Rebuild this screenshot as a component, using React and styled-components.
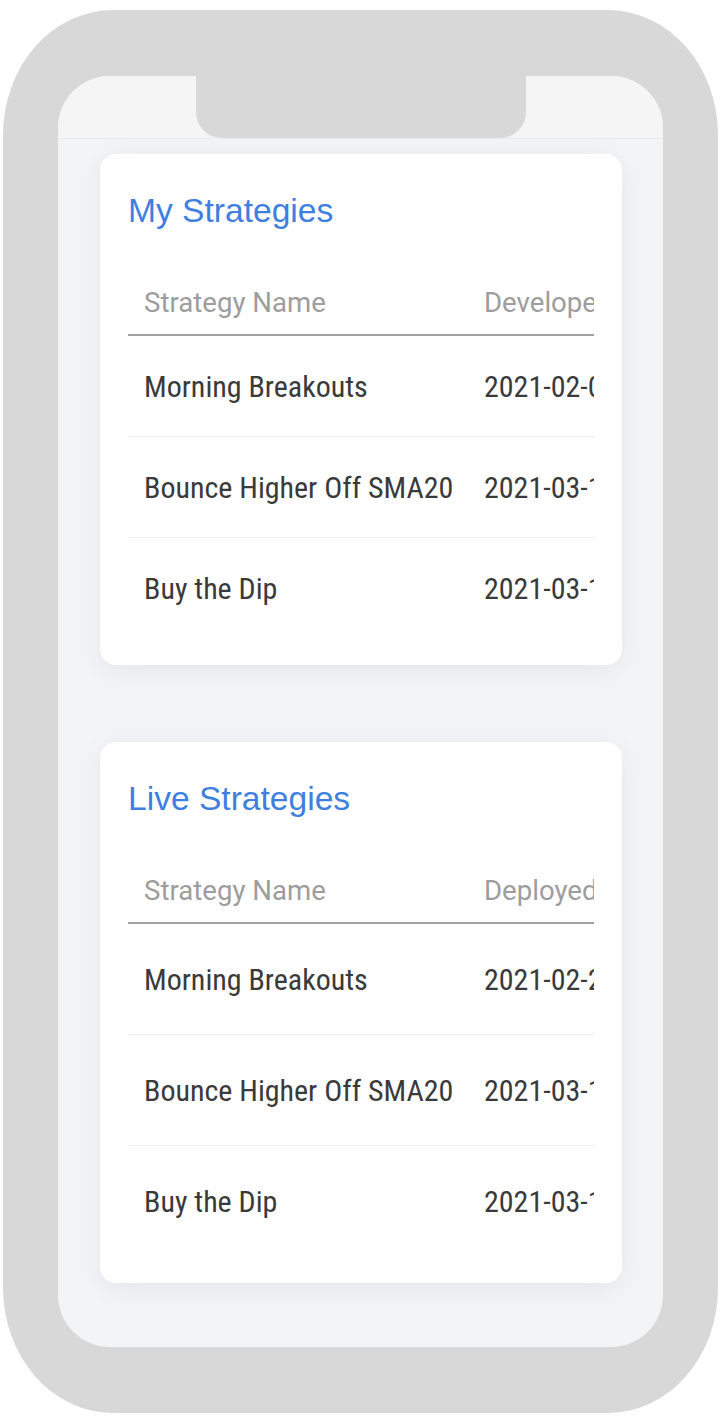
import React from "react"
import styled, { createGlobalStyle } from "styled-components"

const GlobalStyle = createGlobalStyle`
  body {
    margin: 0;
    background: #ffffff;
    font-family: Roboto, "Liberation Sans", sans-serif;
  }
`

const myStrategies = [
  { name: "Morning Breakouts", date: "2021-02-08" },
  { name: "Bounce Higher Off SMA20", date: "2021-03-12" },
  { name: "Buy the Dip", date: "2021-03-15" },
]

const liveStrategies = [
  { name: "Morning Breakouts", date: "2021-02-24" },
  { name: "Bounce Higher Off SMA20", date: "2021-03-16" },
  { name: "Buy the Dip", date: "2021-03-18" },
]

const StrategyCard = ({ title, dateLabel, rows, rowHeight }) => (
  <Card>
    <Title>{title}</Title>
    <TableWrap>
      <HeaderRow>
        <NameHead>Strategy Name</NameHead>
        <DateHead>{dateLabel}</DateHead>
        <DateHead>Status</DateHead>
      </HeaderRow>
      {rows.map((r, i) => (
        <Row key={r.name} height={rowHeight} last={i === rows.length - 1}>
          <NameCell>{r.name}</NameCell>
          <DateCell>{r.date}</DateCell>
          <DateCell>Active</DateCell>
        </Row>
      ))}
    </TableWrap>
  </Card>
)

const App = () => {
  return (
    <>
      <GlobalStyle />
      <Phone>
        <Screen>
          <StatusBar>
            <Notch />
          </StatusBar>
          <Content>
            <StrategyCard title="My Strategies" dateLabel="Developed" rows={myStrategies} rowHeight={101} />
            <StrategyCard title="Live Strategies" dateLabel="Deployed" rows={liveStrategies} rowHeight={111} />
          </Content>
        </Screen>
      </Phone>
    </>
  )
}

export default App

const Phone = styled.div`
  box-sizing: border-box;
  margin: 10px 0 0 3px;
  width: 715px;
  height: 1403px;
  padding: 66px 55px;
  background: #d8d8d8;
  border-radius: 110px / 125px;
`

const Screen = styled.div`
  display: flex;
  flex-direction: column;
  height: 100%;
  background: #f3f4f6;
  border-radius: 52px;
  overflow: hidden;
`

const StatusBar = styled.div`
  display: flex;
  justify-content: center;
  height: 62px;
  flex-shrink: 0;
  background: #f5f5f6;
  border-bottom: 1px solid #e8e9ec;
`

const Notch = styled.div`
  width: 330px;
  height: 62px;
  margin-left: 1px;
  background: #d8d8d8;
  border-radius: 0 0 26px 26px;
`

const Content = styled.div`
  display: flex;
  flex-direction: column;
  gap: 77px;
  padding: 15px 41px 0 42px;
`

const Card = styled.div`
  background: #ffffff;
  border-radius: 16px;
  padding: 38px 28px 26px;
  box-shadow: 0 6px 26px rgba(40, 50, 90, 0.07);
`

const Title = styled.h2`
  margin: 0;
  font-family: "Liberation Sans", Arial, sans-serif;
  font-weight: 400;
  font-size: 33.6px;
  line-height: 38px;
  color: #3e7fe0;
`

const TableWrap = styled.div`
  margin-top: 40px;
  overflow: hidden;
`

const HeaderRow = styled.div`
  display: flex;
  align-items: center;
  height: 66px;
  box-sizing: border-box;
  border-bottom: 2px solid #a2a2a2;
`

const Row = styled.div`
  display: flex;
  align-items: center;
  box-sizing: border-box;
  height: ${p => p.height}px;
  border-bottom: ${p => (p.last ? "none" : "1px solid #ededed")};
`

const NameHead = styled.div`
  flex: 0 0 340px;
  min-width: 0;
  box-sizing: border-box;
  padding: 0 16px;
  font-family: Roboto, sans-serif;
  font-size: 27.6px;
  color: #9d9d9d;
  white-space: nowrap;
`

const DateHead = styled(NameHead)`
  flex: 0 0 auto;
`

const NameCell = styled.div`
  flex: 0 0 340px;
  min-width: 0;
  box-sizing: border-box;
  padding: 0 16px;
  font-family: "Roboto Condensed", "Liberation Sans Narrow", Roboto, sans-serif;
  font-stretch: condensed;
  font-size: 30px;
  color: #3a3a3a;
  white-space: nowrap;
`

const DateCell = styled(NameCell)`
  flex: 0 0 auto;
`
